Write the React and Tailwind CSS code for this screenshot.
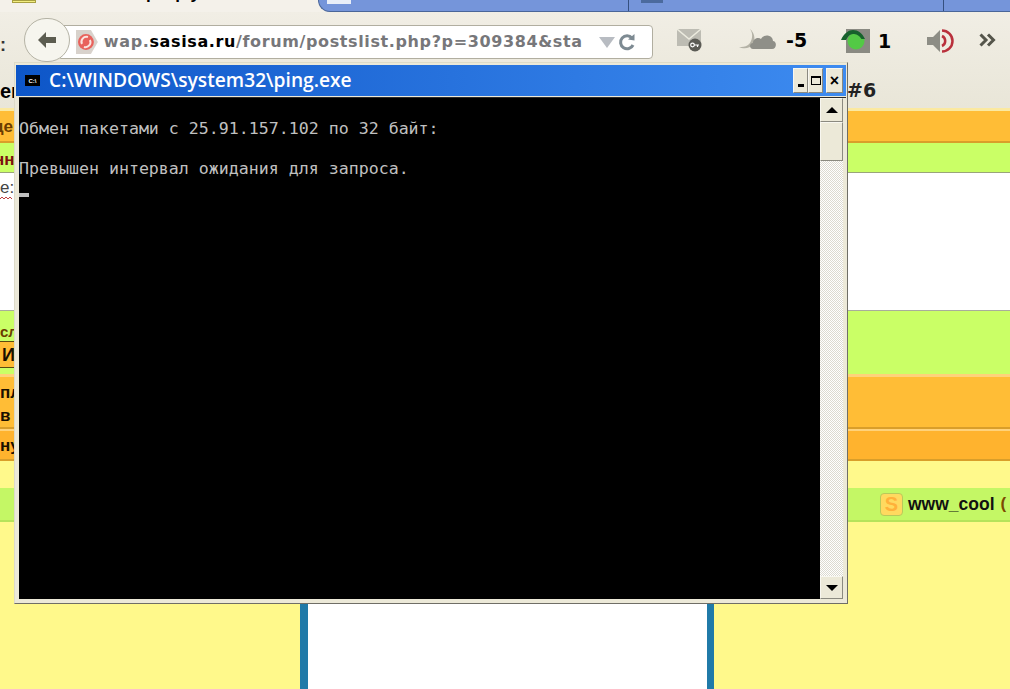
const uiFont = "font-['Liberation_Sans',sans-serif]";

const BackIcon = () => (
  <svg width="22" height="22" viewBox="0 0 22 22">
    <path d="M10 3 L2 11 L10 19 L10 14 L20 14 L20 8 L10 8 Z" fill="#5c5c50" />
  </svg>
);

const SiteIcon = () => (
  <svg width="24" height="26" viewBox="0 0 24 26">
    <path d="M1 1 H16 L23 13 L16 25 H1 Z" fill="#d8d2cc" />
    <circle cx="11" cy="13" r="8" fill="#e8625c" />
    <path d="M7 15 A5 5 0 0 1 13 8 M15 11 A5 5 0 0 1 9 18" stroke="#fbe4e0" strokeWidth="2" fill="none" />
  </svg>
);

const ReloadIcon = () => (
  <svg width="18" height="18" viewBox="0 0 18 18">
    <path d="M14 5 A6.500 6.500 0 1 0 15 12" stroke="#7d8a92" strokeWidth="3" fill="none" />
    <path d="M10 6.500 L16.500 7.500 L16.500 1 Z" fill="#7d8a92" />
  </svg>
);

const MailIcon = () => (
  <svg width="26" height="24" viewBox="0 0 26 24">
    <rect x="0" y="1" width="24" height="17" fill="#bdbcb3" />
    <path d="M0 1 L12 11 L24 1" stroke="#ecebdf" strokeWidth="1.500" fill="none" />
    <circle cx="18" cy="17" r="6.500" fill="#5b5b55" />
    <circle cx="15.500" cy="17" r="1.800" fill="none" stroke="#fff" strokeWidth="1.200" />
    <path d="M17 17 H22 M20.500 17 V19" stroke="#fff" strokeWidth="1.200" />
  </svg>
);

const WeatherIcon = () => (
  <svg width="38" height="22" viewBox="0 0 38 22">
    <path d="M11 0 C15 5 13 13 9 16 C6 18 3 18 0 18 C4 20 11 20 14 15 C17 10 15 3 11 0 Z" fill="#b4b2a6" />
    <path d="M14 20 C10 20 10 14 14 14 C14 9 20 8 22 10 C25 4 34 6 34 12 C38 12 38 20 33 20 Z" fill="#8f8f88" />
  </svg>
);

const NetIcon = () => (
  <svg width="30" height="26" viewBox="0 0 30 26">
    <rect x="5" y="1" width="24" height="24" fill="#8a8a82" />
    <circle cx="15" cy="13" r="8.500" fill="#53c945" />
    <path d="M0 12 C3 5 8 2 12 2 C17 2 21 5 24 11 L20.500 11 C18 7 15 6 12 6 C9 6 7 8 5 12 Z" fill="#17612c" />
  </svg>
);

const SpeakerIcon = () => (
  <svg width="28" height="24" viewBox="0 0 28 24">
    <path d="M1 8 H7 L14 1 V23 L7 16 H1 Z" fill="#8d8d85" />
    <path d="M16 7 A5.500 5.500 0 0 1 16 17" stroke="#b9303c" strokeWidth="2.500" fill="none" />
    <path d="M16 1.500 A10.500 10.500 0 0 1 16 22.500" stroke="#b9303c" strokeWidth="2.500" fill="none" />
  </svg>
);

const ChevronsIcon = () => (
  <svg width="18" height="14" viewBox="0 0 18 14">
    <path d="M1.500 1.500 L7 7 L1.500 12.500 M9 1.500 L14.500 7 L9 12.500" stroke="#55554b" strokeWidth="3" fill="none" />
  </svg>
);

const Arrow = ({ down }) => (
  <div
    className={`h-0 w-0 border-x-[6px] border-x-transparent ${
      down ? "border-t-[6px] border-t-black" : "border-b-[6px] border-b-black"
    }`}
  />
);

const WinButton = ({ children, className = "" }) => (
  <div
    className={`flex items-center justify-center bg-[#ece9d8] border border-[#f8f7f0] border-r-[#8b8a80] border-b-[#8b8a80] ${className}`}
  >
    {children}
  </div>
);

const Band = ({ className = "", children }) => <div className={`relative shrink-0 ${className}`}>{children}</div>;

const Crop = ({ top, children, className = "" }) => (
  <span className={`absolute font-['Liberation_Sans',sans-serif] font-bold leading-none whitespace-nowrap ${className}`} style={{ top }}>
    {children}
  </span>
);

const TabStrip = () => (
  <div className="relative flex h-3 shrink-0 overflow-hidden bg-[#f4f1ea]">
    <div className="ml-3 h-[3px] w-6 border border-[#a8a040] bg-[#f3ee80]" />
    <div className="ml-[282px] flex h-3 flex-1 rounded-bl-xl border-b border-l border-[#4a6699] bg-[#7595da]">
      <div className="w-[310px] border-r border-r-[#35507f]">
        <div className="ml-2 h-[4px] w-6 bg-[#e8eef8]" />
      </div>
      <div className="w-[315px] border-r border-r-[#35507f]">
        <div className="ml-3 h-[3px] w-[22px] bg-[#4b6a9e]" />
      </div>
    </div>
    <div className={`absolute left-[146px] top-[-16px] text-[17px] font-bold leading-5 whitespace-pre text-black ${uiFont}`}>р    р у</div>
  </div>
);

const Toolbar = () => (
  <div className="relative h-[96px] shrink-0 bg-gradient-to-b from-[#f1eee5] to-[#e9e6d8]">
    <span className={`absolute left-0 top-[20px] text-[18px] font-bold text-[#333] ${uiFont}`}>:</span>
    <span className="absolute left-[847px] top-[66px] font-['DejaVu_Sans',sans-serif] text-[19px] font-bold leading-6 text-[#222]">#6</span>
    <span className={`absolute left-0 top-[67px] text-[20px] font-bold leading-6 text-black ${uiFont}`}>ен</span>
    <div className="absolute left-[24px] top-[6px] z-10 flex h-[44px] w-[46px] items-center justify-center rounded-full border border-[#b5b3a5] bg-[#f6f5ee]">
      <BackIcon />
    </div>
    <div className="flex h-full items-start pl-[60px] pt-[13px]">
      <div className="flex h-[34px] w-[593px] items-center rounded-r border border-[#b1aea0] bg-white pl-[14px] pr-[16px] font-['DejaVu_Sans',sans-serif] text-[16px] font-semibold tracking-[0.62px] text-[#77777a]">
        <SiteIcon />
        <div className="ml-[5px] w-[482px] whitespace-nowrap">
          wap.<span className="font-bold text-black">sasisa.ru</span>/forum/postslist.php?p=309384&amp;sta
        </div>
        <div className="ml-[16px] h-0 w-0 border-x-[8px] border-t-[11px] border-x-transparent border-t-[#b8bcc2]" />
        <div className="ml-[3px] flex"><ReloadIcon /></div>
      </div>
      <div className="ml-[24px] mt-[3px] flex items-center">
        <MailIcon />
      </div>
      <div className="ml-[36px] mt-[4px] flex items-center">
        <WeatherIcon />
        <span className="ml-[9px] font-['DejaVu_Sans',sans-serif] text-[19px] font-bold leading-none text-black">-5</span>
      </div>
      <div className="ml-[34px] mt-[3px] flex items-center">
        <NetIcon />
        <span className="ml-[7px] font-['DejaVu_Sans',sans-serif] text-[19px] font-bold leading-none text-black">1</span>
      </div>
      <div className="ml-[35px] mt-[4px] flex"><SpeakerIcon /></div>
      <div className="ml-[25px] mt-[8px] flex"><ChevronsIcon /></div>
    </div>
  </div>
);

const ConsoleWindow = () => (
  <div className="absolute left-[14px] top-[62px] z-20 flex h-[542px] w-[834px] flex-col border border-[#dedbc8] border-r-[#6f6e66] border-b-[#6f6e66] bg-[#ece9d8] px-[1px] pt-[2px] pb-[4px]">
    <div className="flex h-[31px] shrink-0 items-center bg-gradient-to-r from-[#0d56c8] to-[#3d8bf0] pl-[9px] pr-[3px]">
      <div className="flex h-[11px] w-[15px] items-center justify-center bg-black text-[6px] font-bold leading-none text-white">
        <span className={uiFont}>C:\</span>
      </div>
      <span className="ml-[9px] mt-[-2px] font-['Open_Sans',sans-serif] text-[19.2px] font-semibold leading-none whitespace-nowrap text-white">
        C:\WINDOWS\system32\ping.exe
      </span>
      <div className="ml-auto flex h-[25px] items-stretch">
        <WinButton className="w-[15px] items-end pb-[5px]">
          <div className="h-[3px] w-[6px] bg-black" />
        </WinButton>
        <WinButton className="w-[15px]">
          <div className="h-[9px] w-[10px] border border-t-2 border-black" />
        </WinButton>
        <WinButton className="ml-[3px] w-[17px]">
          <span className={`text-[16px] font-bold leading-none text-black ${uiFont}`}>×</span>
        </WinButton>
      </div>
    </div>
    <div className="mt-[1px] ml-[3px] flex min-h-0 flex-1 border-t border-[#2a2a2a] pr-[3px]">
      <div className="flex-1 bg-black pt-[21px] font-['DejaVu_Sans_Mono',monospace] text-[16.6px] leading-[20px] whitespace-pre text-[#c0c0c0]">
        <div>Обмен пакетами с 25.91.157.102 по 32 байт:</div>
        <div>&nbsp;</div>
        <div>Превышен интервал ожидания для запроса.</div>
        <div className="mt-[14px] h-[4px] w-[10px] bg-[#c0c0c0]" />
      </div>
      <div className="flex w-[23px] shrink-0 flex-col bg-[repeating-conic-gradient(#ffffff_0_25%,#dcdad0_0_50%)] bg-[length:2px_2px]">
        <WinButton className="h-[24px] shrink-0"><Arrow /></WinButton>
        <WinButton className="h-[39px] shrink-0" />
        <div className="flex-1" />
        <WinButton className="h-[23px] shrink-0"><Arrow down /></WinButton>
      </div>
    </div>
  </div>
);

export default function App() {
  return (
    <div className="relative flex h-[689px] w-[1010px] flex-col overflow-hidden bg-[#fff98b]">
      <TabStrip />
      <Toolbar />
      <Band className="h-[3px] bg-[#fbe9a0]" />
      <Band className="h-[32px] border-b-2 border-b-[#d99e2a] bg-[#ffbd36]">
        <Crop top={7} className="left-[-7px] text-[17px] text-[#6b3c00]">це</Crop>
      </Band>
      <Band className="h-[30px] border-b border-b-[#9aa57a] bg-[#caff66]">
        <Crop top={8} className="left-[-6px] text-[17px] text-[#7d1010]">нн</Crop>
      </Band>
      <Band className="h-[138px] border-b border-b-[#a9ad9c] bg-white">
        <Crop top={6} className="left-0 text-[17px] font-normal text-[#444]">е:</Crop>
        <svg className="absolute left-0 top-[23px]" width="12" height="4" viewBox="0 0 12 4">
          <path d="M0 3 L2 1 L4 3 L6 1 L8 3 L10 1 L12 3" stroke="#c04040" strokeWidth="1" fill="none" />
        </svg>
      </Band>
      <Band className="h-[63px] bg-[#caff66]">
        <Crop top={13} className="left-0 text-[15px] text-[#6b3c00]">сл</Crop>
        <div className="absolute left-0 top-[30px] flex h-[27px] w-[14px] items-center border-y border-y-[#5a4a10] bg-[#ffbd36]">
          <span className={`pl-[2px] text-[18px] font-bold leading-none text-[#1a1000] ${uiFont}`}>И</span>
        </div>
      </Band>
      <Band className="h-[55px] border-t-[3px] border-t-[#ffd27a] border-b-2 border-b-[#d99e2a] bg-[#ffbd36]">
        <Crop top={7} className="left-0 text-[17px] text-[#1a1000]">пл</Crop>
        <Crop top={30} className="left-0 text-[17px] text-[#1a1000]">в (</Crop>
      </Band>
      <Band className="h-[32px] border-t-2 border-t-[#ffd27a] border-b-2 border-b-[#d99e2a] bg-[#ffb32e]">
        <Crop top={6} className="left-0 text-[17px] text-[#1a1000]">ну</Crop>
      </Band>
      <Band className="h-[27px] bg-[#fff98b]" />
      <Band className="flex h-[34px] items-center border-b-2 border-b-[#b5e35b] bg-[#c4f765] pl-[880px]">
        <div className={`flex h-[23px] w-[23px] items-center justify-center rounded-sm border border-[#b9c95a] bg-[#ffd95f] text-[20px] font-bold leading-none text-[#ffb13a] ${uiFont}`}>
          S
        </div>
        <span className={`ml-[5px] whitespace-nowrap text-[17.5px] font-bold text-[#111] ${uiFont}`}>www_cool</span>
        <span className={`ml-[6px] text-[17px] font-bold text-[#7d4a00] ${uiFont}`}>(</span>
      </Band>
      <div className="flex flex-1 pl-[300px]">
        <div className="w-[414px] border-l-8 border-r-[7px] border-x-[#207aa8] bg-white" />
      </div>
      <ConsoleWindow />
    </div>
  );
}
